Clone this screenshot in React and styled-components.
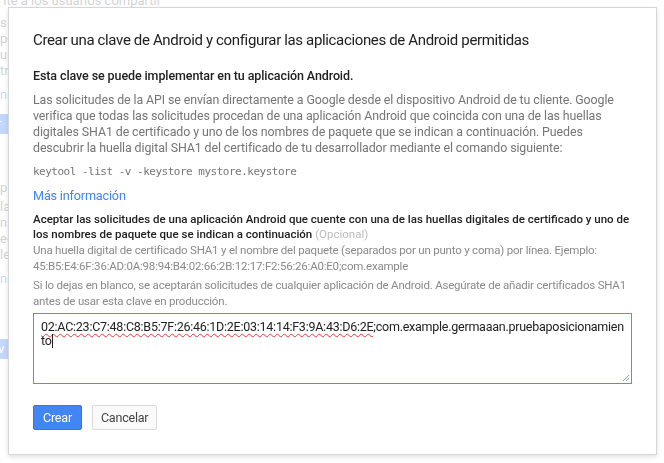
import React from 'react';
import styled, { createGlobalStyle } from 'styled-components';

const GlobalStyle = createGlobalStyle`
  html, body { margin: 0; padding: 0; background: #ffffff; }
  body { font-family: Roboto, "Noto Sans", Arial, sans-serif; overflow: hidden; }
  #root { width: 664px; height: 463px; }
`;

/* ---------- page behind the dialog ---------- */
const Page = styled.div`
  width: 664px;
  height: 463px;
  overflow: hidden;
  display: flex;
  flex-direction: column;
  font-size: 13px;
  line-height: 16px;
  color: #757575;
  white-space: nowrap;
`;

const PageLine = styled.div`
  margin-top: ${p => p.$mt || 0}px;
  color: ${p => (p.$link ? '#4285f4' : '#757575')};
`;

const PageButton = styled.div`
  align-self: flex-start;
  margin-top: ${p => p.$mt || 0}px;
  margin-left: -30px;
  padding: 0 12px;
  height: 20px;
  line-height: 20px;
  background: #4285f4;
  color: #ffffff;
  font-size: 13px;
`;

const Scrim = styled.div`
  position: fixed;
  inset: 0;
  background: rgba(255, 255, 255, 0.68);
`;

/* ---------- dialog ---------- */
const Dialog = styled.div`
  position: fixed;
  left: 8px;
  top: 7px;
  width: 649px;
  height: 448px;
  box-sizing: border-box;
  background: #ffffff;
  border: 1px solid #d6d6d6;
  box-shadow: 0 2px 5px rgba(0, 0, 0, 0.12);
  padding: 20px 24px 0 24px;
  display: flex;
  flex-direction: column;
`;

const Title = styled.h2`
  margin: 0;
  font-size: 15px;
  line-height: 24px;
  font-weight: 400;
  letter-spacing: -0.35px;
  color: #212121;
`;

const SubHead = styled.div`
  margin-top: 16px;
  font-size: 12.5px;
  line-height: 16px;
  font-weight: 500;
  letter-spacing: -0.1px;
  color: #212121;
`;

const Text = styled.p`
  margin: ${p => p.$mt || 0}px 0 0 0;
  font-size: 12.4px;
  line-height: 16px;
  letter-spacing: -0.1px;
  color: #757575;
`;

const Code = styled.div`
  margin-top: 8px;
  font-family: "DejaVu Sans Mono", "Liberation Mono", monospace;
  font-size: 11px;
  line-height: 16px;
  letter-spacing: -0.5px;
  color: #757575;
`;

const Link = styled.a`
  margin-top: 8px;
  align-self: flex-start;
  font-size: 12.7px;
  line-height: 16px;
  letter-spacing: -0.2px;
  color: #4285f4;
  text-decoration: none;
  cursor: pointer;
`;

const Label = styled.div`
  margin-top: 8px;
  font-size: 11.5px;
  line-height: 15px;
  font-weight: 500;
  letter-spacing: 0;
  color: #212121;
`;

const Optional = styled.span`
  font-weight: 400;
  color: #bdbdbd;
`;

const Help = styled.div`
  margin-top: ${p => p.$mt || 0}px;
  font-size: 11.5px;
  line-height: 16px;
  letter-spacing: -0.2px;
  color: #8a8a8a;
`;

const Field = styled.div`
  position: relative;
  margin-top: 4px;
  height: 71px;
  box-sizing: border-box;
  border: 1px solid #4d90fe;
  padding: 6px 7px;
  font-size: 12.5px;
  line-height: 14px;
  letter-spacing: -0.25px;
  color: #212121;
  white-space: nowrap;
`;

const Misspelled = styled.span`
  text-decoration: underline wavy #e53935;
  text-decoration-thickness: 1px;
  text-underline-offset: 2px;
`;

const Caret = styled.span`
  display: inline-block;
  width: 1px;
  height: 14px;
  vertical-align: -3px;
  background: #212121;
`;

const Grip = styled.svg`
  position: absolute;
  right: 1px;
  bottom: 1px;
`;

const Actions = styled.div`
  margin-top: 21px;
  display: flex;
  gap: 10px;
`;

const Button = styled.button`
  height: 25px;
  padding: 0 ${p => (p.$primary ? 9 : 8)}px;
  border-radius: 2px;
  font-family: Roboto, "Noto Sans", Arial, sans-serif;
  font-size: 12.5px;
  letter-spacing: -0.2px;
  cursor: pointer;
  border: 1px solid ${p => (p.$primary ? '#3a73d9' : '#dadada')};
  background: ${p => (p.$primary ? '#4285f4' : '#fafafa')};
  color: ${p => (p.$primary ? '#ffffff' : '#444444')};
`;

export default function App() {
  return (
    <>
      <GlobalStyle />
      <Page>
        <PageLine $mt={-7}>&nbsp;ite a los usuarios compartir</PageLine>
        <PageLine $mt={6}>s con</PageLine>
        <PageLine>pe</PageLine>
        <PageLine>us</PageLine>
        <PageLine>tr</PageLine>
        <PageLine $mt={8} $link>n</PageLine>
        <PageButton $mt={11}>Ver</PageButton>
        <PageLine $mt={46}>p</PageLine>
        <PageLine $mt={3}>la</PageLine>
        <PageLine>n</PageLine>
        <PageLine>ec</PageLine>
        <PageLine>le</PageLine>
        <PageLine $mt={8} $link>n</PageLine>
        <PageButton $mt={52}>Nev</PageButton>
      </Page>
      <Scrim />
      <Dialog role="dialog">
        <Title>Crear una clave de Android y configurar las aplicaciones de Android permitidas</Title>
        <SubHead>Esta clave se puede implementar en tu aplicación Android.</SubHead>
        <Text $mt={8}>
          Las solicitudes de la API se envían directamente a Google desde el dispositivo Android de tu cliente. Google
          verifica que todas las solicitudes procedan de una aplicación Android que coincida con una de las huellas
          digitales SHA1 de certificado y uno de los nombres de paquete que se indican a continuación. Puedes
          descubrir la huella digital SHA1 del certificado de tu desarrollador mediante el comando siguiente:
        </Text>
        <Code>keytool -list -v -keystore mystore.keystore</Code>
        <Link>Más información</Link>
        <Label>
          Aceptar las solicitudes de una aplicación Android que cuente con una de las huellas digitales de certificado y uno de
          los nombres de paquete que se indican a continuación <Optional>(Opcional)</Optional>
        </Label>
        <Help>
          Una huella digital de certificado SHA1 y el nombre del paquete (separados por un punto y coma) por línea. Ejemplo:
          <br />
          45:B5:E4:6F:36:AD:0A:98:94:B4:02:66:2B:12:17:F2:56:26:A0:E0;com.example
        </Help>
        <Help $mt={3}>
          Si lo dejas en blanco, se aceptarán solicitudes de cualquier aplicación de Android. Asegúrate de añadir certificados SHA1
          antes de usar esta clave en producción.
        </Help>
        <Field>
          <Misspelled>02:AC:23:C7:48:C8:B5:7F:26:46:1D:2E:03:14:14:F3:9A:43:D6:2E</Misspelled>;com.example.germaaan.pruebaposicionamien
          <br />
          to<Caret />
          <Grip width="9" height="9" viewBox="0 0 9 9">
            <path d="M8 2 L2 8 M8 5 L5 8" stroke="#9e9e9e" strokeWidth="1" fill="none" />
          </Grip>
        </Field>
        <Actions>
          <Button $primary>Crear</Button>
          <Button>Cancelar</Button>
        </Actions>
      </Dialog>
    </>
  );
}
